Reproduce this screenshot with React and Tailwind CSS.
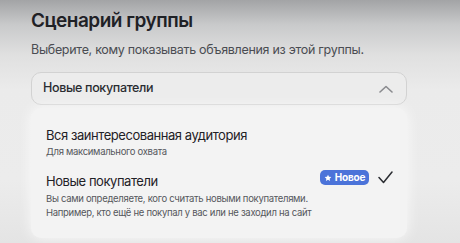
import React from "react";

export default function App() {
  return (
    <div
      className="w-[460px] h-[243px] overflow-hidden relative bg-[linear-gradient(180deg,#a3a4a6_0px,#c9cacb_25px,#e0e0e0_55px,#ebebeb_90px,#ececec_180px,#e4e4e4_243px)]"
      style={{ fontFamily: "Inter, 'Noto Sans', sans-serif" }}
    >
      <div className="pl-[31px] pr-[53px] pt-[9px]">
        <h1 className="text-[19px] leading-[24px] font-semibold text-[#1f2126] tracking-[-0.5px]">
          Сценарий группы
        </h1>
        <p className="mt-[9px] text-[12.5px] leading-[16px] text-[#4a4c52] tracking-[-0.3px] whitespace-nowrap">
          Выберите, кому показывать объявления из этой группы.
        </p>
        <div className="mt-[14px] h-[33px] rounded-[10px] border border-[#d2d2d2] bg-[#ececec] flex items-center justify-between pl-[11px] pr-[13px]">
          <span className="text-[12.5px] font-medium text-[#2a2c31] tracking-[-0.35px]">Новые покупатели</span>
          <svg width="14" height="8" viewBox="0 0 14 8" fill="none">
            <path d="M1 7L7 1.5L13 7" stroke="#8a8b8f" strokeWidth="1.6" strokeLinecap="round" strokeLinejoin="round" />
          </svg>
        </div>
        <div className="mt-[3px] h-[130px] rounded-[10px] bg-[#f3f3f3] shadow-[0_0_14px_rgba(255,255,255,0.8)] pl-[15px] pr-[14px] pt-[19px]">
          <div className="text-[13px] leading-[17px] text-[#1f2126] tracking-[-0.45px] whitespace-nowrap">
            Вся заинтересованная аудитория
          </div>
          <div className="mt-[1px] text-[9.5px] leading-[13px] text-[#55575c] tracking-[-0.3px] whitespace-nowrap">
            Для максимального охвата
          </div>
          <div className="mt-[15px] flex items-start justify-between">
            <div>
              <div className="text-[13px] leading-[17px] text-[#1f2126] tracking-[-0.45px] whitespace-nowrap">
                Новые покупатели
              </div>
              <div className="mt-[2px] text-[9.5px] leading-[13.5px] text-[#55575c] tracking-[-0.3px] whitespace-nowrap">
                Вы сами определяете, кого считать новыми покупателями.
                <br />
                Например, кто ещё не покупал у вас или не заходил на сайт
              </div>
            </div>
            <div className="flex items-center gap-[9px] mt-[-3px]">
              <div className="h-[15px] w-[49px] rounded-[5px] bg-[#4b73d9] flex items-center justify-center gap-[3px] text-white text-[10px] font-bold tracking-[-0.2px]">
                <svg width="8" height="8" viewBox="0 0 24 24" fill="white">
                  <path d="M12 2l3 6.5 7 .8-5.2 4.8 1.5 7L12 17.6 5.7 21.1l1.5-7L2 9.3l7-.8z" />
                </svg>
                <span>Новое</span>
              </div>
              <svg width="15" height="13" viewBox="0 0 15 13" fill="none">
                <path d="M1 6.5L5.5 11.5L14 1" stroke="#2a2c31" strokeWidth="1.5" strokeLinecap="round" strokeLinejoin="round" />
              </svg>
            </div>
          </div>
        </div>
      </div>
    </div>
  );
}
